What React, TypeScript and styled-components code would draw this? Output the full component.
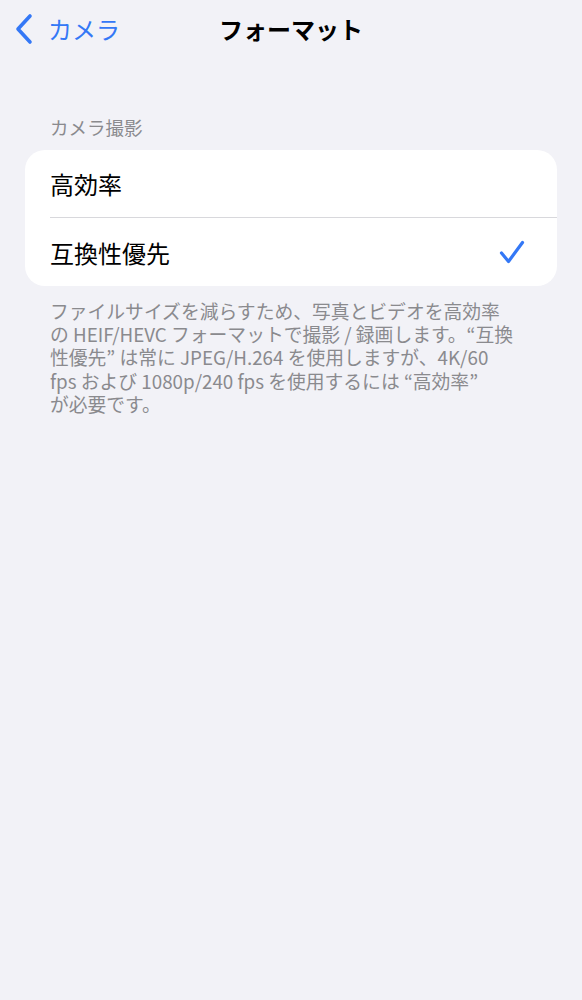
import React from "react";
import styled, { createGlobalStyle } from "styled-components";

const Global = createGlobalStyle`
  html, body { margin: 0; padding: 0; background: #f2f2f7; }
  body { font-family: "Noto Sans CJK JP", "Noto Sans", sans-serif; -webkit-font-smoothing: antialiased; }
`;

const Page = styled.div`
  width: 582px;
  min-height: 1000px;
  background: #f2f2f7;
  display: flex;
  flex-direction: column;
`;

const NavBar = styled.div`
  height: 58px;
  display: grid;
  grid-template-columns: 1fr auto 1fr;
  align-items: center;
`;

const BackButton = styled.div`
  display: flex;
  align-items: center;
  gap: 14px;
  padding-left: 14px;
  color: #3478f6;
  font-size: 24px;
  line-height: 1;
  margin-top: -1px;
`;

const Title = styled.div`
  font-size: 24px;
  font-weight: 700;
  color: #000;
  line-height: 1;
  margin-top: -1px;
`;

const Section = styled.div`
  padding: 0 25px;
  margin-top: 57px;
  display: flex;
  flex-direction: column;
`;

const SectionHeader = styled.div`
  font-size: 18.5px;
  color: #8a8a8e;
  padding-left: 25px;
  line-height: 24px;
  margin-bottom: 11px;
`;

const Card = styled.div`
  background: #fff;
  border-radius: 20px;
  overflow: hidden;
`;

const Row = styled.div<{ $divider?: boolean }>`
  height: 68px;
  margin-left: 25px;
  padding-right: 32px;
  display: flex;
  align-items: center;
  justify-content: space-between;
  box-sizing: border-box;
  border-bottom: ${(p) => (p.$divider ? "1px solid #d8d8dc" : "none")};
  font-size: 24px;
  color: #000;
`;

const Footer = styled.div`
  padding: 13px 25px 0 25px;
  display: flex;
  flex-direction: column;
  font-size: 18.8px;
  line-height: 23.2px;
  color: #8a8a8e;
`;

const FooterLine = styled.div`
  white-space: pre;
`;

const Chevron = () => (
  <svg width="20" height="32" viewBox="0 0 20 32">
    <path d="M16 3 L4 16 L16 29" fill="none" stroke="#3478f6" strokeWidth="3.6" strokeLinecap="round" strokeLinejoin="round" />
  </svg>
);

const Check = () => (
  <svg width="26" height="24" viewBox="0 0 26 24">
    <path d="M2.5 13 L9.5 21.5 L23.5 2.5" fill="none" stroke="#3478f6" strokeWidth="3.2" strokeLinecap="round" strokeLinejoin="round" />
  </svg>
);

const footerLines = [
  "ファイルサイズを減らすため、写真とビデオを高効率",
  "の HEIF/HEVC フォーマットで撮影 / 録画します。“互換",
  "性優先” は常に JPEG/H.264 を使用しますが、4K/60",
  "fps および 1080p/240 fps を使用するには “高効率”",
  "が必要です。",
];

export default function App() {
  return (
    <Page>
      <Global />
      <NavBar>
        <BackButton>
          <Chevron />
          <span>カメラ</span>
        </BackButton>
        <Title>フォーマット</Title>
        <div />
      </NavBar>
      <Section>
        <SectionHeader>カメラ撮影</SectionHeader>
        <Card>
          <Row $divider>
            <span>高効率</span>
          </Row>
          <Row>
            <span>互換性優先</span>
            <Check />
          </Row>
        </Card>
        <Footer>
          {footerLines.map((l, i) => (
            <FooterLine key={i}>{l}</FooterLine>
          ))}
        </Footer>
      </Section>
    </Page>
  );
}
